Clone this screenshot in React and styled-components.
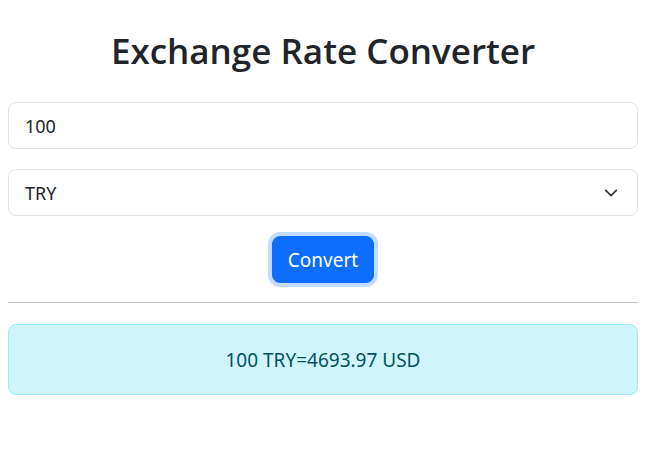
import React, { useState } from "react"
import styled, { createGlobalStyle } from "styled-components"

const GlobalStyle = createGlobalStyle`
    *{
        box-sizing: border-box;
    }
    body{
        margin: 0;
        font-family: "Noto Sans", "Open Sans", sans-serif;
        color: #212529;
        background: #fff;
    }
`

const Container = styled.div`
    padding: 0 8px;
`

const Title = styled.h1`
    margin: 0;
    padding-top: 30px;
    margin-bottom: 30px;
    font-family: "Open Sans", "Noto Sans", sans-serif;
    font-size: 35px;
    font-weight: 600;
    line-height: 1.2;
    text-align: center;
    color: #212529;
`

const Field = styled.input`
    display: block;
    width: 100%;
    height: 47px;
    padding: 0 16px;
    font-family: inherit;
    font-size: 18px;
    color: #212529;
    background: #fff;
    border: 1px solid #dee2e6;
    border-radius: 8px;
    margin-bottom: 20px;
    outline: none;
`

const Select = styled.select`
    display: block;
    width: 100%;
    height: 47px;
    padding: 0 48px 0 16px;
    font-family: inherit;
    font-size: 18px;
    color: #212529;
    background-color: #fff;
    background-image: url("data:image/svg+xml,%3csvg xmlns='http://www.w3.org/2000/svg' viewBox='0 0 16 16'%3e%3cpath fill='none' stroke='%23343a40' stroke-linecap='round' stroke-linejoin='round' stroke-width='2' d='m2 5 6 6 6-6'/%3e%3c/svg%3e");
    background-repeat: no-repeat;
    background-position: right 19px center;
    background-size: 14px 14px;
    border: 1px solid #dee2e6;
    border-radius: 8px;
    appearance: none;
    outline: none;
`

const ButtonRow = styled.div`
    display: flex;
    justify-content: center;
    margin-top: 20px;
`

const Button = styled.button`
    height: 47px;
    width: 102px;
    padding: 0;
    font-family: inherit;
    font-size: 19px;
    color: #fff;
    background: #0d6efd;
    border: 1px solid #0d6efd;
    border-radius: 8px;
    box-shadow: 0 0 0 4px rgba(13, 110, 253, 0.25);
    cursor: pointer;
`

const Divider = styled.hr`
    margin: 19px 0 21px;
    border: 0;
    border-top: 1px solid #c8c9ca;
`

const Alert = styled.div`
    height: 71px;
    display: flex;
    align-items: center;
    justify-content: center;
    padding: 0 16px;
    font-size: 19px;
    color: #055160;
    background: #cff4fc;
    border: 1px solid #9eeaf9;
    border-radius: 8px;
`

const App = () => {
    const [amount, setAmount] = useState("100")
    const [currency, setCurrency] = useState("TRY")
    return (
        <>
            <GlobalStyle/>
            <Container>
                <Title>Exchange Rate Converter</Title>
                <Field type="text" value={amount} onChange={e => setAmount(e.target.value)}/>
                <Select value={currency} onChange={e => setCurrency(e.target.value)}>
                    <option>TRY</option>
                    <option>USD</option>
                    <option>EUR</option>
                </Select>
                <ButtonRow>
                    <Button>Convert</Button>
                </ButtonRow>
                <Divider/>
                <Alert>100 TRY=4693.97 USD</Alert>
            </Container>
        </>
    )
}

export default App
